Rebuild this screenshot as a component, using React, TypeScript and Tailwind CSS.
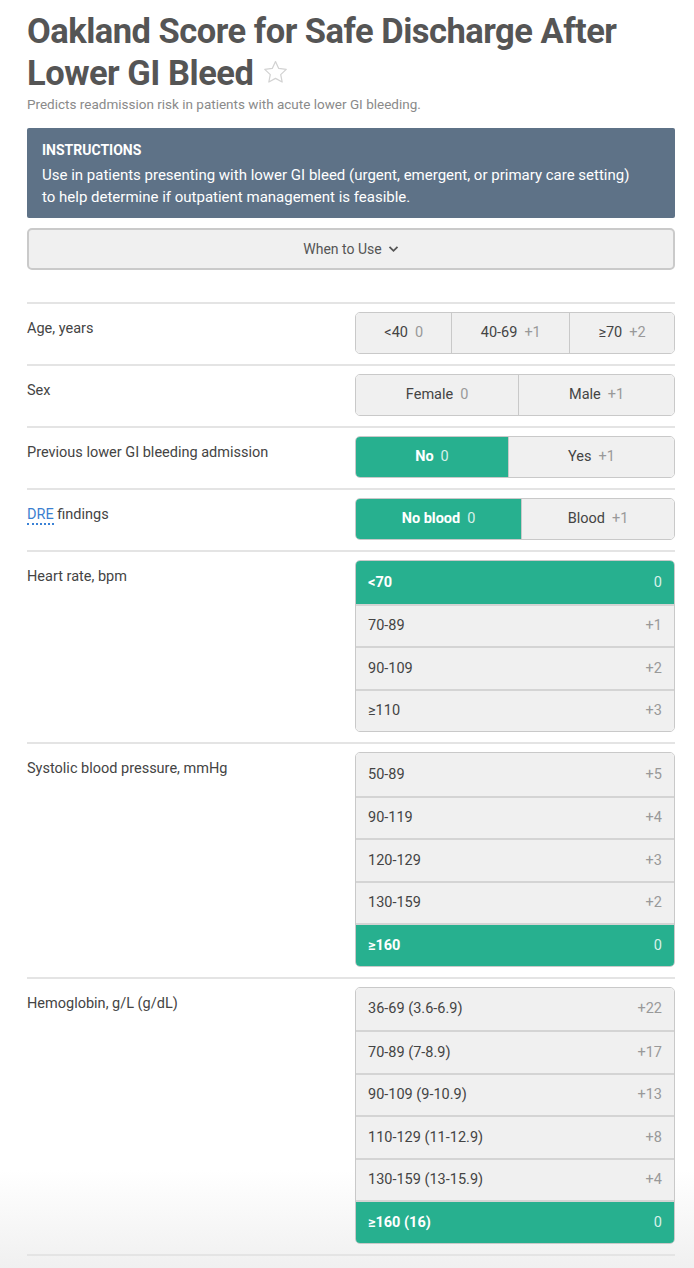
import React from "react";

type Opt = { label: string; pts: string; on?: boolean };

const font = { fontFamily: "Roboto, 'Noto Sans', sans-serif" };

function Segmented({ opts }: { opts: Opt[] }) {
  return (
    <div className="flex h-[42px] w-[320px] overflow-hidden rounded-[5px] border border-[#c9c9c9]">
      {opts.map((o, i) => (
        <div
          key={i}
          className={`flex flex-auto items-center justify-center gap-[7px] text-[14.5px] ${
            i > 0 ? "border-l border-[#c9c9c9]" : ""
          } ${o.on ? "bg-[#27b08f] font-bold text-white" : "bg-[#f0f0f0] text-[#444]"}`}
        >
          <span>{o.label}</span>
          <span className={o.on ? "font-normal text-[#d8f1ea]" : "text-[#999]"}>{o.pts}</span>
        </div>
      ))}
    </div>
  );
}

function ListGroup({ opts }: { opts: Opt[] }) {
  return (
    <div className="flex w-[320px] flex-col overflow-hidden rounded-[5px] border border-[#c9c9c9]">
      {opts.map((o, i) => (
        <div
          key={i}
          className={`flex h-[42.5px] items-center justify-between px-3 text-[14.5px] ${
            i > 0 ? "border-t-2 border-[#d4d4d4]" : ""
          } ${o.on ? "bg-[#27b08f] font-bold text-white" : "bg-[#f0f0f0] text-[#444]"}`}
        >
          <span>{o.label}</span>
          <span className={o.on ? "font-normal text-[#d8f1ea]" : "text-[#999]"}>{o.pts}</span>
        </div>
      ))}
    </div>
  );
}

function Row({ label, children }: { label: React.ReactNode; children: React.ReactNode }) {
  return (
    <div className="flex justify-between border-t-2 border-[#e4e4e4] pt-[8px] pb-[10px]">
      <div className="pt-[6px] text-[14.5px] text-[#444]">{label}</div>
      {children}
    </div>
  );
}

function Star() {
  return (
    <svg width="25" height="24" viewBox="0 0 24 23" fill="none" className="ml-[10px] inline-block align-[1px]">
      <path
        d="M12 1.5l3.1 6.6 7.2.9-5.3 5 1.4 7.1L12 17.6l-6.4 3.5 1.4-7.1-5.3-5 7.2-.9z"
        stroke="#d2d2d2"
        strokeWidth="1.2"
        strokeLinejoin="round"
      />
    </svg>
  );
}

export default function App() {
  return (
    <div
      className="min-h-[1268px] bg-[linear-gradient(to_bottom,#ffffff_1170px,#f0f0f0_1268px)] pt-[10px] pr-[19px] pl-[27px]"
      style={font}
    >
      {/* Header */}
      <h1 className="w-[640px] text-[34.5px] leading-[42px] font-bold tracking-[-0.5px] text-[#555]">
        Oakland Score for Safe Discharge After Lower GI Bleed
        <Star />
      </h1>
      <p className="mt-0 text-[13.5px] text-[#8a8a8a]">
        Predicts readmission risk in patients with acute lower GI bleeding.
      </p>

      {/* Instructions */}
      <div className="mt-[14px] rounded-[2px] bg-[#5e7287] pt-[12px] pr-[40px] pb-[10px] pl-[15px] text-white">
        <div className="text-[14px] font-bold">INSTRUCTIONS</div>
        <p className="mt-[3px] text-[15px] leading-[22px]">
          Use in patients presenting with lower GI bleed (urgent, emergent, or primary care setting) to
          help determine if outpatient management is feasible.
        </p>
      </div>

      <div className="mt-[10px] flex h-[42px] items-center justify-center gap-[6px] rounded-[5px] border-2 border-[#cacaca] bg-[#f0f0f0] text-[14px] text-[#555]">
        When to Use
        <svg width="11" height="8" viewBox="0 0 11 8" fill="none">
          <path d="M1.5 1.8 5.5 5.8 9.5 1.8" stroke="#555" strokeWidth="1.8" />
        </svg>
      </div>

      {/* Inputs */}
      <div className="mt-[32px]">
        <Row label="Age, years">
          <Segmented
            opts={[
              { label: "<40", pts: "0" },
              { label: "40-69", pts: "+1" },
              { label: "≥70", pts: "+2" },
            ]}
          />
        </Row>
        <Row label="Sex">
          <Segmented
            opts={[
              { label: "Female", pts: "0" },
              { label: "Male", pts: "+1" },
            ]}
          />
        </Row>
        <Row label="Previous lower GI bleeding admission">
          <Segmented
            opts={[
              { label: "No", pts: "0", on: true },
              { label: "Yes", pts: "+1" },
            ]}
          />
        </Row>
        <Row
          label={
            <>
              <span className="border-b-2 border-dotted border-[#3b82d6] text-[#3b7fd0]">DRE</span> findings
            </>
          }
        >
          <Segmented
            opts={[
              { label: "No blood", pts: "0", on: true },
              { label: "Blood", pts: "+1" },
            ]}
          />
        </Row>
        <Row label="Heart rate, bpm">
          <ListGroup
            opts={[
              { label: "<70", pts: "0", on: true },
              { label: "70-89", pts: "+1" },
              { label: "90-109", pts: "+2" },
              { label: "≥110", pts: "+3" },
            ]}
          />
        </Row>
        <Row label="Systolic blood pressure, mmHg">
          <ListGroup
            opts={[
              { label: "50-89", pts: "+5" },
              { label: "90-119", pts: "+4" },
              { label: "120-129", pts: "+3" },
              { label: "130-159", pts: "+2" },
              { label: "≥160", pts: "0", on: true },
            ]}
          />
        </Row>
        <Row label="Hemoglobin, g/L (g/dL)">
          <ListGroup
            opts={[
              { label: "36-69 (3.6-6.9)", pts: "+22" },
              { label: "70-89 (7-8.9)", pts: "+17" },
              { label: "90-109 (9-10.9)", pts: "+13" },
              { label: "110-129 (11-12.9)", pts: "+8" },
              { label: "130-159 (13-15.9)", pts: "+4" },
              { label: "≥160 (16)", pts: "0", on: true },
            ]}
          />
        </Row>
        <div className="border-t-2 border-[#e4e4e4]" />
      </div>
    </div>
  );
}
